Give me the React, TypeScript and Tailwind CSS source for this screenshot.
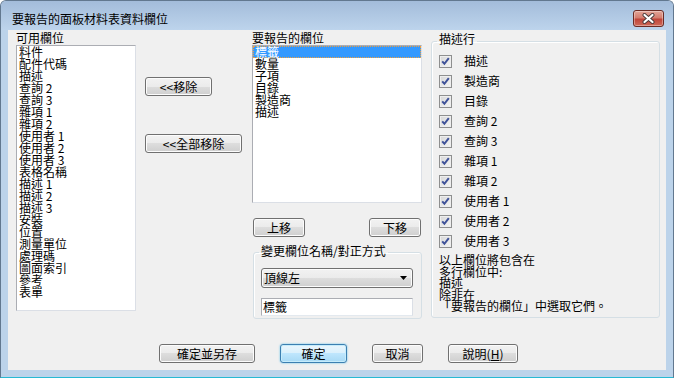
import React from "react";

const btn =
  "flex items-center justify-center h-[19px] rounded-[3px] border border-[#707070] bg-[linear-gradient(to_bottom,#f2f2f2_0%,#ebebeb_50%,#dddddd_50%,#cfcfcf_100%)] shadow-[inset_0_0_0_1px_#fcfcfc] text-[12px] leading-[12px] text-black";

const listBox =
  "bg-white border border-t-[#abadb3] border-l-[#abadb3] border-r-[#dbdfe6] border-b-[#dbdfe6]";

function Check() {
  return (
    <div className="w-[13px] h-[13px] border border-[#8e8f8f] bg-[linear-gradient(135deg,#d6d6d6,#f6f6f6)] shadow-[inset_0_0_0_1px_#eeeeee] flex items-center justify-center shrink-0">
      <svg width="9" height="9" viewBox="0 0 9 9">
        <path d="M1.2 4.4 L3.4 6.8 L7.8 1.2" stroke="#3f5299" strokeWidth="2" fill="none" />
      </svg>
    </div>
  );
}

const available = [
  "料件",
  "配件代碼",
  "描述",
  "查詢 2",
  "查詢 3",
  "雜項 1",
  "雜項 2",
  "使用者 1",
  "使用者 2",
  "使用者 3",
  "表格名稱",
  "描述 1",
  "描述 2",
  "描述 3",
  "安裝",
  "位置",
  "測量單位",
  "處理碼",
  "圖面索引",
  "參考",
  "表單",
];

const reported = ["數量", "子項", "目錄", "製造商", "描述"];

const descRows = [
  "描述",
  "製造商",
  "目錄",
  "查詢 2",
  "查詢 3",
  "雜項 1",
  "雜項 2",
  "使用者 1",
  "使用者 2",
  "使用者 3",
];

export default function App() {
  return (
    <div className="w-[674px] h-[378px] flex flex-col bg-[#bcd3ea] border border-[#62788f] border-b-[#27b9d3] rounded-t-[6px] overflow-hidden font-['Noto_Sans_CJK_TC','Noto_Sans_CJK_SC',sans-serif] text-[12px] leading-[12px] text-black">
      {/* title bar */}
      <div className="h-[29px] shrink-0 flex items-start justify-between bg-[linear-gradient(to_bottom,#a3bcda,#bdd4ec)]">
        <div className="mt-[11px] ml-[11px] leading-[14px] text-[12px]">要報告的面板材料表資料欄位</div>
        <div className="mt-[9px] mr-[9px] w-[31px] h-[17px] rounded-[3px] border border-[#6b2b24] bg-[linear-gradient(to_bottom,#e3a598_0%,#d47d6f_45%,#c0453a_55%,#cf6a58_100%)] shadow-[inset_0_0_0_1px_rgba(255,255,255,0.35)] flex items-center justify-center">
          <svg width="13" height="11" viewBox="0 0 13 11">
            <path d="M2.5 2 L10.5 9 M10.5 2 L2.5 9" stroke="#4a3a3a" strokeWidth="4" strokeLinecap="round" />
            <path d="M2.5 2 L10.5 9 M10.5 2 L2.5 9" stroke="#ffffff" strokeWidth="2.2" strokeLinecap="round" />
          </svg>
        </div>
      </div>

      {/* client area */}
      <div className="ml-[7px] w-[658px] h-[340px] shrink-0 bg-[#f0f0f0] flex flex-col">
        <div className="flex items-start pl-[8px] pt-[1px]">
          {/* Column A */}
          <div className="w-[120px] flex flex-col">
            <div className="h-[14px] leading-[14px]">可用欄位</div>
            <div className={`${listBox} h-[266px] pl-[2px]`}>
              {available.map((t) => (
                <div key={t} className="h-[12px] leading-[12px] whitespace-nowrap">
                  {t}
                </div>
              ))}
            </div>
          </div>

          {/* Column B */}
          <div className="w-[116px] pl-[9px] flex flex-col">
            <div className={`${btn} w-[67px] mt-[46px]`}>&lt;&lt;移除</div>
            <div className={`${btn} w-[97px] mt-[38px]`}>&lt;&lt;全部移除</div>
          </div>

          {/* Column C */}
          <div className="w-[170px] flex flex-col">
            <div className="h-[14px] leading-[14px]">要報告的欄位</div>
            <div className={`${listBox} h-[158px]`}>
              <div className="h-[12px] bg-[#3399ff] text-white border border-dotted border-[#f0a040] leading-[10px] pl-[1px]">
                標籤
              </div>
              {reported.map((t) => (
                <div key={t} className="h-[12px] leading-[12px] pl-[2px]">
                  {t}
                </div>
              ))}
            </div>
            <div className="mt-[15px] px-[1px] flex justify-between">
              <div className={`${btn} w-[52px]`}>上移</div>
              <div className={`${btn} w-[52px]`}>下移</div>
            </div>
            <fieldset className="mt-[8px] ml-[1px] w-[169px] h-[74px] border border-[#d5dfe5] rounded-[3px] shadow-[inset_1px_1px_0_#ffffff] pl-[7px]">
              <legend className="ml-[-2px] px-[2px] h-[14px] leading-[12px]">變更欄位名稱/對正方式</legend>
              <div className="mt-[9px] w-[152px] h-[20px] rounded-[3px] border border-[#707070] bg-[linear-gradient(to_bottom,#f2f2f2_0%,#ebebeb_50%,#dddddd_50%,#cfcfcf_100%)] shadow-[inset_0_0_0_1px_#fcfcfc] flex items-center justify-between pl-[2px] pr-[5px]">
                <span>頂線左</span>
                <svg width="7" height="4" viewBox="0 0 7 4">
                  <path d="M0 0 L7 0 L3.5 4 Z" fill="#000" />
                </svg>
              </div>
              <div className="mt-[10px] w-[152px] h-[18px] bg-white border border-t-[#abadb3] border-l-[#abadb3] border-r-[#dbdfe6] border-b-[#e3e9ef] flex items-center pl-[1px]">
                標籤
              </div>
            </fieldset>
          </div>

          {/* Column D */}
          <fieldset className="ml-[9px] mt-[2px] w-[229px] h-[285px] border border-[#d5dfe5] rounded-[3px] shadow-[inset_1px_1px_0_#ffffff] pl-[7px]">
            <legend className="ml-[-2px] px-[2px] h-[16px] leading-[11px]">描述行</legend>
            <div className="mt-[2px] flex flex-col">
              {descRows.map((t) => (
                <div key={t} className="h-[20px] flex items-center gap-[12px]">
                  <Check />
                  <span className="leading-[12px]">{t}</span>
                </div>
              ))}
            </div>
            <div className="mt-[3px] leading-[11.5px]">
              <div>以上欄位將包含在</div>
              <div>多行欄位中:</div>
              <div>描述</div>
              <div>除非在</div>
              <div>「要報告的欄位」中選取它們。</div>
            </div>
          </fieldset>
        </div>

        {/* bottom buttons */}
        <div className="mt-auto pb-[7px] pl-[151px] flex gap-[25px]">
          <div className={`${btn} w-[96px]`}>確定並另存</div>
          <div className="flex items-center justify-center h-[19px] w-[67px] rounded-[3px] border border-[#3c7fb1] bg-[linear-gradient(to_bottom,#eaf6fd_0%,#d9f0fc_50%,#bee6fd_50%,#a7d9f5_100%)] shadow-[inset_0_0_0_1px_#c6ecfb,0_0_2px_#56bde9]">
            確定
          </div>
          <div className={`${btn} w-[51px]`}>取消</div>
          <div className={`${btn} w-[70px]`}>說明(<span className="underline">H</span>)</div>
        </div>
      </div>
      <div className="flex-1" />
    </div>
  );
}
